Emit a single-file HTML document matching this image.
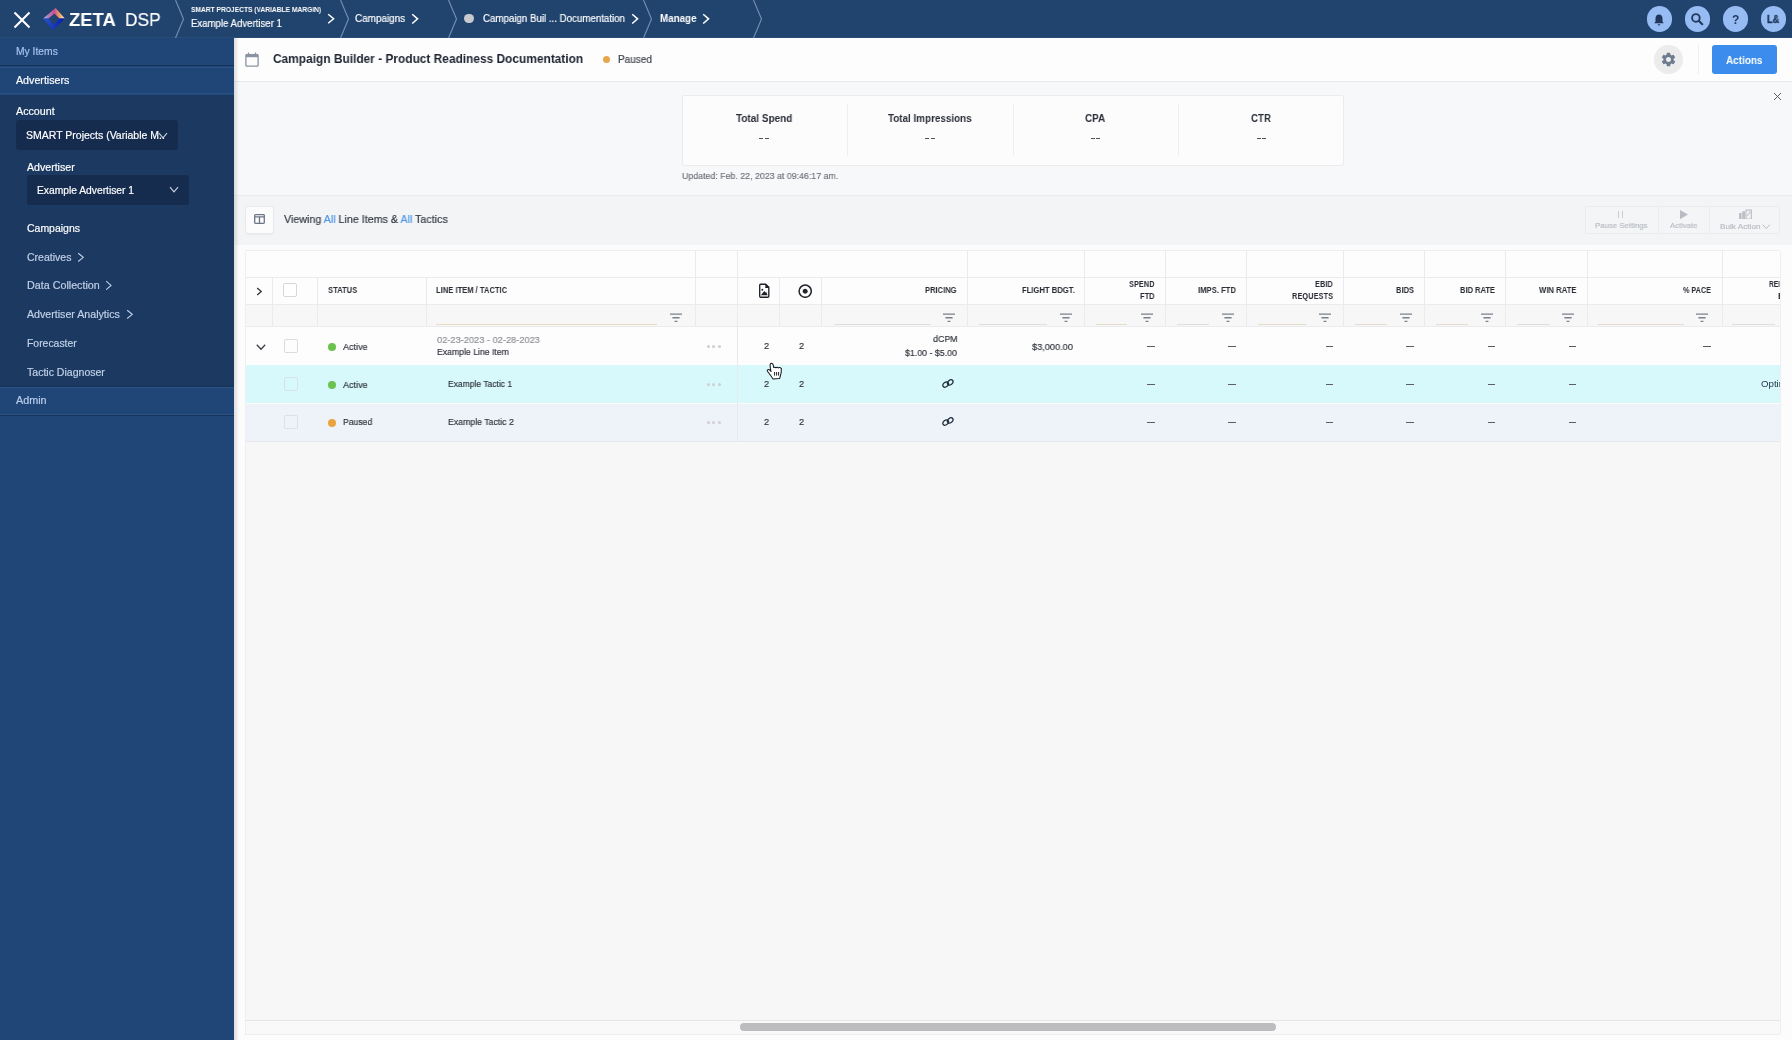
<!DOCTYPE html>
<html><head><meta charset="utf-8"><style>
html,body{margin:0;padding:0;width:1792px;height:1040px;overflow:hidden;background:#f6f6f8;}
.a{position:absolute;}
.t{will-change:transform;font-family:"Liberation Sans",sans-serif;line-height:1;white-space:nowrap;transform-origin:0 0;}
</style></head><body>
<div class="a" style="left:0px;top:0px;width:1792px;height:37px;background:#21446f;"></div>
<div class="a" style="left:0px;top:37px;width:1792px;height:1px;background:#2a4c78;"></div>
<svg class="a" style="left:13px;top:11px" width="18" height="18" viewBox="0 0 18 18"><path d="M1.5 1.5L16.5 16.5M16.5 1.5L1.5 16.5" stroke="#fff" stroke-width="2.1"/></svg>
<svg class="a" style="left:36px;top:4px" width="40" height="30" viewBox="36 4 40 30">
<defs><linearGradient id="lg1" gradientUnits="userSpaceOnUse" x1="43" y1="0" x2="65" y2="0"><stop offset="0" stop-color="#a6d0f5"/><stop offset="0.25" stop-color="#b27cb8"/><stop offset="0.52" stop-color="#cc4f94"/><stop offset="0.75" stop-color="#f0a060"/><stop offset="1" stop-color="#fff3d0"/></linearGradient>
<linearGradient id="lg2" gradientUnits="userSpaceOnUse" x1="43" y1="0" x2="65" y2="0"><stop offset="0" stop-color="#2a56cf"/><stop offset="1" stop-color="#0716ad"/></linearGradient></defs>
<path d="M43.2 18.6L55.6 8L64.8 18.6L59.6 18.6L54.4 13.4L48.4 18.6Z" fill="url(#lg1)"/>
<path d="M43.2 18.6L53 29.9L64.8 18.6L59.8 18.6L53.3 24.9L48.4 18.6Z" fill="url(#lg2)"/>
</svg>
<div class="a t" style="left:69.00px;top:10.30px;font-size:19px;color:#fff;font-weight:700;transform:scaleX(0.9696);">ZETA</div>
<div class="a t" style="left:125.09px;top:10.30px;font-size:19px;color:#fff;font-weight:400;-webkit-text-stroke:0.18px currentColor;transform:scaleX(0.9092);">DSP</div>
<svg class="a" style="left:339.5px;top:0" width="10" height="38" viewBox="0 0 10 38"><path d="M0.5 0 L8.5 19 L0.5 38" fill="none" stroke="#7890b4" stroke-width="1.1"/></svg>
<svg class="a" style="left:448.0px;top:0" width="10" height="38" viewBox="0 0 10 38"><path d="M0.5 0 L8.5 19 L0.5 38" fill="none" stroke="#7890b4" stroke-width="1.1"/></svg>
<svg class="a" style="left:642.5px;top:0" width="10" height="38" viewBox="0 0 10 38"><path d="M0.5 0 L8.5 19 L0.5 38" fill="none" stroke="#7890b4" stroke-width="1.1"/></svg>
<svg class="a" style="left:175px;top:0" width="10" height="38" viewBox="0 0 10 38"><path d="M0.5 0 L8.5 19 L0.5 38" fill="none" stroke="#7890b4" stroke-width="1.1"/></svg>
<svg class="a" style="left:753px;top:0" width="10" height="38" viewBox="0 0 10 38"><path d="M0.5 0 L8.5 19 L0.5 38" fill="none" stroke="#7890b4" stroke-width="1.1"/></svg>
<div class="a t" style="left:191.00px;top:5.85px;font-size:7.9px;color:#fff;font-weight:700;transform:scaleX(0.8445);">SMART PROJECTS (VARIABLE MARGIN)</div>
<div class="a t" style="left:191.00px;top:18.00px;font-size:10.6px;color:#fff;font-weight:400;-webkit-text-stroke:0.18px currentColor;transform:scaleX(0.9078);">Example Advertiser 1</div>
<svg class="a" style="left:327px;top:13px" width="8" height="11.5" viewBox="0 0 8 11.5"><path d="M1.2 1.2 L6.6 5.75 L1.2 10.3" fill="none" stroke="#fff" stroke-width="1.5"/></svg>
<div class="a t" style="left:355.00px;top:13.60px;font-size:10.4px;color:#fff;font-weight:400;-webkit-text-stroke:0.18px currentColor;transform:scaleX(0.9549);">Campaigns</div>
<svg class="a" style="left:410.5px;top:12.5px" width="8.0" height="11.7" viewBox="0 0 8.0 11.7"><path d="M1.2 1.2 L6.6 5.85 L1.2 10.5" fill="none" stroke="#fff" stroke-width="1.5"/></svg>
<div class="a" style="left:464.3px;top:13.8px;width:9.5px;height:9.5px;border-radius:50%;background:#c8cacf"></div>
<div class="a t" style="left:483.00px;top:13.60px;font-size:10.4px;color:#fff;font-weight:400;-webkit-text-stroke:0.18px currentColor;transform:scaleX(0.9348);">Campaign Buil ... Documentation</div>
<svg class="a" style="left:631px;top:12.5px" width="8" height="11.7" viewBox="0 0 8 11.7"><path d="M1.2 1.2 L6.6 5.85 L1.2 10.5" fill="none" stroke="#fff" stroke-width="1.5"/></svg>
<div class="a t" style="left:659.60px;top:13.60px;font-size:10.4px;color:#fff;font-weight:700;transform:scaleX(0.9433);">Manage</div>
<svg class="a" style="left:702px;top:12.5px" width="8" height="11.7" viewBox="0 0 8 11.7"><path d="M1.2 1.2 L6.6 5.85 L1.2 10.5" fill="none" stroke="#fff" stroke-width="1.5"/></svg>
<div class="a" style="left:1646.5px;top:6.2px;width:25.6px;height:25.6px;border-radius:50%;background:#97bcf3"></div>
<div class="a" style="left:1684.5px;top:6.2px;width:25.6px;height:25.6px;border-radius:50%;background:#97bcf3"></div>
<div class="a" style="left:1722.5px;top:6.2px;width:25.6px;height:25.6px;border-radius:50%;background:#97bcf3"></div>
<div class="a" style="left:1760.5px;top:6.2px;width:25.6px;height:25.6px;border-radius:50%;background:#97bcf3"></div>
<svg class="a" style="left:1652.3px;top:12.5px" width="14" height="14" viewBox="0 0 14 14"><path d="M7 1.6c-2.1 0-3.5 1.6-3.5 3.8v3.1L2.2 10.3h9.6L10.5 8.5V5.4C10.5 3.2 9.1 1.6 7 1.6z" fill="#1f355a"/><path d="M5.6 11.2h2.8L7 12.9z" fill="#1f355a"/></svg>
<svg class="a" style="left:1690.3px;top:12px" width="14" height="14" viewBox="0 0 14 14"><circle cx="5.9" cy="5.9" r="3.8" fill="none" stroke="#233a5e" stroke-width="1.9"/><path d="M8.8 8.8L12.2 12.2" stroke="#233a5e" stroke-width="2.2" stroke-linecap="round"/></svg>
<div class="a t" style="left:1731.80px;top:14.30px;font-size:12px;color:#233a5e;font-weight:700;">?</div>
<div class="a t" style="left:1767.00px;top:14.00px;font-size:10.6px;color:#1f355a;font-weight:700;transform:scaleX(0.8707);-webkit-text-stroke:0.35px currentColor;">L&amp;</div>
<div class="a" style="left:0px;top:38px;width:234px;height:1002px;background:#1f4677;"></div>
<div class="a" style="left:0px;top:65px;width:234px;height:1.2px;background:#183559;"></div>
<div class="a" style="left:0px;top:67px;width:234px;height:1px;background:#2a5284;"></div>
<div class="a" style="left:0px;top:93.3px;width:234px;height:1px;background:#2a5284;"></div>
<div class="a" style="left:0px;top:95px;width:234px;height:291px;background:#1b3961;"></div>
<div class="a" style="left:0px;top:386px;width:234px;height:1px;background:#172f52;"></div>
<div class="a" style="left:0px;top:387.2px;width:234px;height:1px;background:#2b5487;"></div>
<div class="a" style="left:0px;top:414.3px;width:234px;height:1px;background:#2a5284;"></div>
<div class="a" style="left:0px;top:415.3px;width:234px;height:1.2px;background:#183559;"></div>
<div class="a t" style="left:16.40px;top:46.70px;font-size:10.2px;color:#a6c3ef;font-weight:400;-webkit-text-stroke:0.18px currentColor;transform:scaleX(1.0116);">My Items</div>
<div class="a t" style="left:16.20px;top:75.70px;font-size:10.2px;color:#ffffff;font-weight:400;-webkit-text-stroke:0.18px currentColor;transform:scaleX(1.0480);">Advertisers</div>
<div class="a t" style="left:16.20px;top:106.70px;font-size:10.2px;color:#ffffff;font-weight:400;-webkit-text-stroke:0.18px currentColor;transform:scaleX(1.0492);">Account</div>
<div class="a" style="left:16.2px;top:120.3px;width:161.8px;height:30.1px;background:#152c4f;border-radius:3px;"></div>
<div class="a t" style="left:25.70px;top:130.05px;font-size:10.5px;color:#ffffff;font-weight:400;-webkit-text-stroke:0.18px currentColor;">SMART Projects (Variable M..</div>
<svg class="a" style="left:157.5px;top:132px" width="10" height="8" viewBox="0 0 10 8"><path d="M1 1.2L5 5.8L9 1.2" fill="none" stroke="#c8d2e2" stroke-width="1.1"/></svg>
<div class="a t" style="left:27.00px;top:162.70px;font-size:10.2px;color:#ffffff;font-weight:400;-webkit-text-stroke:0.18px currentColor;transform:scaleX(1.0395);">Advertiser</div>
<div class="a" style="left:27.3px;top:175.3px;width:161.5px;height:30.1px;background:#152c4f;border-radius:3px;"></div>
<div class="a t" style="left:36.80px;top:185.70px;font-size:10.2px;color:#ffffff;font-weight:400;-webkit-text-stroke:0.18px currentColor;transform:scaleX(1.0077);">Example Advertiser 1</div>
<svg class="a" style="left:168.5px;top:186px" width="10" height="8" viewBox="0 0 10 8"><path d="M1 1.2L5 5.8L9 1.2" fill="none" stroke="#c8d2e2" stroke-width="1.1"/></svg>
<div class="a t" style="left:26.90px;top:223.70px;font-size:10.2px;color:#ffffff;font-weight:400;-webkit-text-stroke:0.18px currentColor;transform:scaleX(1.0285);">Campaigns</div>
<div class="a t" style="left:26.90px;top:252.70px;font-size:10.2px;color:#c2d1e8;font-weight:400;-webkit-text-stroke:0.18px currentColor;transform:scaleX(1.0318);">Creatives</div>
<svg class="a" style="left:77px;top:251.5px" width="7.700000000000003" height="10.699999999999989" viewBox="0 0 7.700000000000003 10.699999999999989"><path d="M1.2 1.2 L6.3000000000000025 5.349999999999994 L1.2 9.49999999999999" fill="none" stroke="#c2d1e8" stroke-width="1.1"/></svg>
<div class="a t" style="left:26.90px;top:280.70px;font-size:10.2px;color:#c2d1e8;font-weight:400;-webkit-text-stroke:0.18px currentColor;transform:scaleX(1.0538);">Data Collection</div>
<svg class="a" style="left:104.8px;top:280px" width="7.400000000000006" height="10.800000000000011" viewBox="0 0 7.400000000000006 10.800000000000011"><path d="M1.2 1.2 L6.000000000000005 5.400000000000006 L1.2 9.600000000000012" fill="none" stroke="#c2d1e8" stroke-width="1.1"/></svg>
<div class="a t" style="left:26.90px;top:309.70px;font-size:10.2px;color:#c2d1e8;font-weight:400;-webkit-text-stroke:0.18px currentColor;transform:scaleX(1.0441);">Advertiser Analytics</div>
<svg class="a" style="left:126px;top:308.5px" width="7.699999999999989" height="10.699999999999989" viewBox="0 0 7.699999999999989 10.699999999999989"><path d="M1.2 1.2 L6.299999999999988 5.349999999999994 L1.2 9.49999999999999" fill="none" stroke="#c2d1e8" stroke-width="1.1"/></svg>
<div class="a t" style="left:26.90px;top:338.70px;font-size:10.2px;color:#c2d1e8;font-weight:400;-webkit-text-stroke:0.18px currentColor;transform:scaleX(1.0224);">Forecaster</div>
<div class="a t" style="left:26.90px;top:367.70px;font-size:10.2px;color:#c2d1e8;font-weight:400;-webkit-text-stroke:0.18px currentColor;transform:scaleX(1.0341);">Tactic Diagnoser</div>
<div class="a t" style="left:16.30px;top:395.70px;font-size:10.2px;color:#bccdeb;font-weight:400;-webkit-text-stroke:0.18px currentColor;transform:scaleX(1.0599);">Admin</div>
<div class="a" style="left:234px;top:38px;width:1558px;height:1002px;background:#fcfcfc;"></div>
<div class="a" style="left:245px;top:441px;width:1535px;height:578.5px;background:#f7f7f8;"></div>
<div class="a" style="left:234px;top:38px;width:1558px;height:43px;background:#fdfdfd;"></div>
<div class="a" style="left:234px;top:81px;width:1558px;height:1px;background:#e8e8eb;"></div>
<svg class="a" style="left:245px;top:51.5px" width="14" height="15" viewBox="0 0 14 15"><rect x="0.9" y="2.6" width="12.2" height="11.6" rx="0.8" fill="none" stroke="#8a93a3" stroke-width="1.3"/><rect x="0.9" y="2.6" width="12.2" height="2.6" fill="#8a93a3"/><path d="M3.5 0.5v3M10.5 0.5v3" stroke="#8a93a3" stroke-width="1.3"/></svg>
<div class="a t" style="left:273.00px;top:53.00px;font-size:12.6px;color:#1d2330;font-weight:700;transform:scaleX(0.9451);">Campaign Builder - Product Readiness Documentation</div>
<div class="a" style="left:603px;top:55.9px;width:7.3px;height:7.3px;border-radius:50%;background:#e6a64a"></div>
<div class="a t" style="left:617.70px;top:54.65px;font-size:10.3px;color:#3a3f4a;font-weight:400;-webkit-text-stroke:0.18px currentColor;transform:scaleX(0.9717);">Paused</div>
<div class="a" style="left:1654px;top:45px;width:28.6px;height:28.6px;border-radius:50%;background:#ececed"></div>
<svg class="a" style="left:1659.8px;top:50.8px" width="17" height="17" viewBox="0 0 24 24"><path fill="#6d7b91" d="M19.14 12.94c.04-.3.06-.61.06-.94 0-.32-.02-.64-.07-.94l2.03-1.58a.49.49 0 00.12-.61l-1.92-3.32a.488.488 0 00-.59-.22l-2.39.96c-.5-.38-1.03-.7-1.62-.94l-.36-2.54a.484.484 0 00-.48-.41h-3.84c-.24 0-.43.17-.47.41l-.36 2.54c-.59.24-1.130.57-1.620.94l-2.39-.96c-.22-.08-.47 0-.59.22L2.74 8.87c-.12.21-.08.47.12.61l2.030 1.58c-.05.3-.09.63-.09.94s.02.64.07.94l-2.03 1.58a.49.49 0 00-.12.61l1.92 3.32c.12.22.37.29.59.22l2.39-.96c.5.38 1.03.7 1.62.94l.36 2.54c.05.24.24.41.48.41h3.84c.24 0 .44-.17.47-.41l.36-2.54c.59-.24 1.13-.56 1.62-.94l2.39.96c.22.08.47 0 .59-.22l1.92-3.32c.12-.22.07-.47-.12-.61l-2.01-1.58zM12 15.6c-1.98 0-3.6-1.62-3.6-3.6s1.62-3.6 3.6-3.6 3.6 1.62 3.6 3.6-1.62 3.6-3.6 3.6z"/></svg>
<div class="a" style="left:1697.5px;top:45px;width:1px;height:29px;background:#efeff1;"></div>
<div class="a" style="left:1712px;top:45px;width:65.3px;height:29px;border-radius:3px;background:#3b8cec"></div>
<div class="a t" style="left:1726.35px;top:54.90px;font-size:10.8px;color:#fff;font-weight:700;transform:scaleX(0.9220);">Actions</div>
<div class="a" style="left:234px;top:82px;width:1558px;height:113px;background:#f7f8fa;"></div>
<div class="a" style="left:234px;top:195px;width:1558px;height:1px;background:#ebecef;"></div>
<svg class="a" style="left:1772.5px;top:91.5px" width="9" height="9" viewBox="0 0 9 9"><path d="M1 1L8 8M8 1L1 8" stroke="#50555e" stroke-width="0.95"/></svg>
<div class="a" style="left:681.5px;top:94.5px;width:662.6px;height:71.5px;background:#fcfcfd;border:1px solid #ececee;box-sizing:border-box;border-radius:2px;"></div>
<div class="a" style="left:847.4px;top:104.2px;width:1px;height:52.2px;background:#eeeeef;"></div>
<div class="a" style="left:1012.7px;top:104.2px;width:1px;height:52.2px;background:#eeeeef;"></div>
<div class="a" style="left:1178.3px;top:104.2px;width:1px;height:52.2px;background:#eeeeef;"></div>
<div class="a t" style="left:735.95px;top:112.70px;font-size:11.2px;color:#2a2e38;font-weight:700;transform:scaleX(0.8918);">Total Spend</div>
<div class="a" style="left:759.45px;top:137.5px;width:4.0px;height:1.5px;background:#4e535b;"></div>
<div class="a" style="left:764.95px;top:137.5px;width:4.0px;height:1.5px;background:#4e535b;"></div>
<div class="a t" style="left:888.20px;top:112.70px;font-size:11.2px;color:#2a2e38;font-weight:700;transform:scaleX(0.8808);">Total Impressions</div>
<div class="a" style="left:925.15px;top:137.5px;width:4.0px;height:1.5px;background:#4e535b;"></div>
<div class="a" style="left:930.65px;top:137.5px;width:4.0px;height:1.5px;background:#4e535b;"></div>
<div class="a t" style="left:1085.45px;top:112.70px;font-size:11.2px;color:#2a2e38;font-weight:700;transform:scaleX(0.8851);">CPA</div>
<div class="a" style="left:1090.75px;top:137.5px;width:4.0px;height:1.5px;background:#4e535b;"></div>
<div class="a" style="left:1096.25px;top:137.5px;width:4.0px;height:1.5px;background:#4e535b;"></div>
<div class="a t" style="left:1251.35px;top:112.70px;font-size:11.2px;color:#2a2e38;font-weight:700;transform:scaleX(0.8685);">CTR</div>
<div class="a" style="left:1256.55px;top:137.5px;width:4.0px;height:1.5px;background:#4e535b;"></div>
<div class="a" style="left:1262.05px;top:137.5px;width:4.0px;height:1.5px;background:#4e535b;"></div>
<div class="a t" style="left:681.50px;top:171.00px;font-size:9.6px;color:#6e7279;font-weight:400;-webkit-text-stroke:0.18px currentColor;transform:scaleX(0.9181);">Updated: Feb. 22, 2023 at 09:46:17 am.</div>
<div class="a" style="left:234px;top:196px;width:1558px;height:49px;background:#f3f4f6;"></div>
<div class="a" style="left:244.9px;top:206.1px;width:28.9px;height:28.3px;background:#fcfcfd;border:1px solid #e8e9ec;box-shadow:0 1px 1px rgba(0,0,0,0.04);border-radius:3px;box-sizing:border-box;"></div>
<svg class="a" style="left:253.6px;top:214px" width="11" height="10" viewBox="0 0 11 10"><rect x="0.7" y="0.7" width="9.6" height="8.6" rx="0.8" fill="none" stroke="#6d7686" stroke-width="1.3"/><path d="M0.7 2.9H10.3M5.5 2.9V9.3" stroke="#6d7686" stroke-width="1.3"/></svg>
<div class="a t" style="left:284.40px;top:213.70px;font-size:11.2px;color:#333842;font-weight:400;-webkit-text-stroke:0.18px currentColor;transform:scaleX(0.9564);">Viewing <span style="color:#4a94e6">All</span> Line Items &amp; <span style="color:#4a94e6">All</span> Tactics</div>
<div class="a" style="left:1584.5px;top:206.3px;width:195.7px;height:27.7px;background:#f4f5f7;border:1px solid #ebecef;border-radius:3px;box-sizing:border-box;"></div>
<div class="a" style="left:1658.3px;top:207px;width:1px;height:26px;background:#ebecef;"></div>
<div class="a" style="left:1709.3px;top:207px;width:1px;height:26px;background:#ebecef;"></div>
<div class="a" style="left:1618.3px;top:211px;width:1.1px;height:6.6px;background:#c9ccd1;"></div>
<div class="a" style="left:1622.3px;top:211px;width:1.1px;height:6.6px;background:#c9ccd1;"></div>
<div class="a t" style="left:1595.00px;top:221.80px;font-size:8px;color:#b7bbc2;font-weight:400;-webkit-text-stroke:0.18px currentColor;transform:scaleX(0.9756);">Pause Settings</div>
<svg class="a" style="left:1680px;top:209.7px" width="8" height="9.2" viewBox="0 0 8 9.2"><path d="M0 0L8 4.6L0 9.2Z" fill="#b9bdc3"/></svg>
<div class="a t" style="left:1670.00px;top:221.80px;font-size:8px;color:#b7bbc2;font-weight:400;-webkit-text-stroke:0.18px currentColor;transform:scaleX(0.9653);">Activate</div>
<svg class="a" style="left:1739px;top:208.5px" width="13" height="10" viewBox="0 0 13 10"><rect x="0" y="4" width="2.6" height="6" fill="#bcc0c6"/><rect x="3.2" y="2.2" width="2.8" height="7.8" fill="#bcc0c6"/><path d="M7 10V1.2H12.3V10Z" fill="none" stroke="#bcc0c6" stroke-width="1.2"/><path d="M8 7L11.5 2.5" stroke="#bcc0c6" stroke-width="1.1"/></svg>
<div class="a t" style="left:1720.00px;top:222.80px;font-size:8px;color:#b7bbc2;font-weight:400;-webkit-text-stroke:0.18px currentColor;transform:scaleX(1.0235);">Bulk Action</div>
<svg class="a" style="left:1761.5px;top:223.5px" width="8.5" height="5.5" viewBox="0 0 8.5 5.5"><path d="M0.6 0.6L4.25 4.6L7.9 0.6" fill="none" stroke="#b7bbc2" stroke-width="1"/></svg>
<div class="a" style="left:245px;top:250px;width:1535px;height:27px;background:#fdfdfd;"></div>
<div class="a" style="left:245px;top:277px;width:1535px;height:27px;background:#fdfdfd;"></div>
<div class="a" style="left:245px;top:304px;width:1535px;height:22.5px;background:#f7f7f8;"></div>
<div class="a" style="left:245px;top:326.5px;width:1535px;height:38.7px;background:#fdfdfd;"></div>
<div class="a" style="left:245px;top:365.2px;width:1535px;height:38.3px;background:#d8f9fb;"></div>
<div class="a" style="left:245px;top:403.5px;width:1535px;height:37.5px;background:#eef3f9;"></div>
<div class="a" style="left:245px;top:250px;width:1535px;height:1px;background:#eeeef0;"></div>
<div class="a" style="left:245px;top:277px;width:1535px;height:1px;background:#ebebee;"></div>
<div class="a" style="left:245px;top:304px;width:1535px;height:1px;background:#ebebee;"></div>
<div class="a" style="left:245px;top:326px;width:1535px;height:1px;background:#ebebee;"></div>
<div class="a" style="left:245px;top:441px;width:1535px;height:1px;background:#e6e8ec;"></div>
<div class="a" style="left:272.3px;top:277px;width:1px;height:49px;background:#ebebee;"></div>
<div class="a" style="left:317.3px;top:277px;width:1px;height:49px;background:#ebebee;"></div>
<div class="a" style="left:425.5px;top:277px;width:1px;height:49px;background:#ebebee;"></div>
<div class="a" style="left:779.2px;top:277px;width:1px;height:49px;background:#ebebee;"></div>
<div class="a" style="left:821.3px;top:277px;width:1px;height:49px;background:#ebebee;"></div>
<div class="a" style="left:694.5px;top:250px;width:1px;height:76px;background:#ebebee;"></div>
<div class="a" style="left:737.4px;top:250px;width:1px;height:76px;background:#ebebee;"></div>
<div class="a" style="left:967.4px;top:250px;width:1px;height:76px;background:#ebebee;"></div>
<div class="a" style="left:1084.2px;top:250px;width:1px;height:76px;background:#ebebee;"></div>
<div class="a" style="left:1165.2px;top:250px;width:1px;height:76px;background:#ebebee;"></div>
<div class="a" style="left:1246.4px;top:250px;width:1px;height:76px;background:#ebebee;"></div>
<div class="a" style="left:1343.4px;top:250px;width:1px;height:76px;background:#ebebee;"></div>
<div class="a" style="left:1424.2px;top:250px;width:1px;height:76px;background:#ebebee;"></div>
<div class="a" style="left:1505.4px;top:250px;width:1px;height:76px;background:#ebebee;"></div>
<div class="a" style="left:1586.7px;top:250px;width:1px;height:76px;background:#ebebee;"></div>
<div class="a" style="left:1721.5px;top:250px;width:1px;height:76px;background:#ebebee;"></div>
<div class="a" style="left:737.4px;top:326px;width:1px;height:115px;background:#e9e9ec;"></div>
<svg class="a" style="left:256px;top:287px" width="7" height="9" viewBox="0 0 7 9"><path d="M1.2 1L5.2 4.5L1.2 8" fill="none" stroke="#333" stroke-width="1.3"/></svg>
<div class="a" style="left:283.2px;top:283px;width:14px;height:14px;background:#fff;border:1px solid #d5d7db;border-radius:2px;box-sizing:border-box;"></div>
<div class="a t" style="left:328.20px;top:285.85px;font-size:8.9px;color:#2a2d35;font-weight:700;transform:scaleX(0.8552);">STATUS</div>
<div class="a t" style="left:436.20px;top:285.85px;font-size:8.9px;color:#2a2d35;font-weight:700;transform:scaleX(0.8562);">LINE ITEM / TACTIC</div>
<svg class="a" style="left:758px;top:283px" width="12" height="15" viewBox="0 0 12 15"><path d="M1.7 2.2Q1.7 1.2 2.7 1.2H7.6L10.8 4.4V13.2Q10.8 14.2 9.8 14.2H2.7Q1.7 14.2 1.7 13.2Z" fill="none" stroke="#1e2128" stroke-width="1.35"/><path d="M7.3 1.2H8.2L10.8 3.8V4.9H7.3Z" fill="#1e2128"/><path d="M2.9 12.3L6.3 7.9L7.5 9.4L8.1 8.8L9.6 12.3Z" fill="#1e2128"/><circle cx="4.3" cy="6.8" r="0.95" fill="#1e2128"/></svg>
<svg class="a" style="left:797.6px;top:283.6px" width="14.4" height="14.4" viewBox="0 0 14.4 14.4"><circle cx="7.2" cy="7.2" r="6.1" fill="none" stroke="#22252b" stroke-width="1.5"/><circle cx="7.2" cy="7.2" r="2.5" fill="#22252b"/></svg>
<div class="a t" style="left:925.40px;top:285.85px;font-size:8.9px;color:#2a2d35;font-weight:700;transform:scaleX(0.8522);">PRICING</div>
<div class="a t" style="left:1021.50px;top:285.85px;font-size:8.9px;color:#2a2d35;font-weight:700;transform:scaleX(0.8621);">FLIGHT BDGT.</div>
<div class="a t" style="left:1128.90px;top:279.85px;font-size:8.9px;color:#2a2d35;font-weight:700;transform:scaleX(0.8342);">SPEND</div>
<div class="a t" style="left:1139.80px;top:291.85px;font-size:8.9px;color:#2a2d35;font-weight:700;transform:scaleX(0.8463);">FTD</div>
<div class="a t" style="left:1197.50px;top:285.85px;font-size:8.9px;color:#2a2d35;font-weight:700;transform:scaleX(0.8657);">IMPS. FTD</div>
<div class="a t" style="left:1315.20px;top:279.85px;font-size:8.9px;color:#2a2d35;font-weight:700;transform:scaleX(0.8351);">EBID</div>
<div class="a t" style="left:1292.30px;top:291.85px;font-size:8.9px;color:#2a2d35;font-weight:700;transform:scaleX(0.8405);">REQUESTS</div>
<div class="a t" style="left:1396.20px;top:285.85px;font-size:8.9px;color:#2a2d35;font-weight:700;transform:scaleX(0.8457);">BIDS</div>
<div class="a t" style="left:1460.30px;top:285.85px;font-size:8.9px;color:#2a2d35;font-weight:700;transform:scaleX(0.8468);">BID RATE</div>
<div class="a t" style="left:1538.80px;top:285.85px;font-size:8.9px;color:#2a2d35;font-weight:700;transform:scaleX(0.8661);">WIN RATE</div>
<div class="a t" style="left:1683.00px;top:285.85px;font-size:8.9px;color:#2a2d35;font-weight:700;transform:scaleX(0.8131);">% PACE</div>
<svg class="a" style="left:669.5px;top:312.5px" width="12" height="9.5" viewBox="0 0 12 9.5"><path d="M0 1.1H12M2.4 4.8H9.6M4.6 8.4H7.4" stroke="#7b8089" stroke-width="1.4"/></svg>
<div class="a" style="left:436px;top:323.6px;width:221.29999999999995px;height:1.2px;background:#e9dcc2;"></div>
<svg class="a" style="left:943px;top:312.5px" width="12" height="9.5" viewBox="0 0 12 9.5"><path d="M0 1.1H12M2.4 4.8H9.6M4.6 8.4H7.4" stroke="#7b8089" stroke-width="1.4"/></svg>
<div class="a" style="left:833.5px;top:323.6px;width:96.20000000000005px;height:1.2px;background:#dedede;"></div>
<svg class="a" style="left:1059.7px;top:312.5px" width="12" height="9.5" viewBox="0 0 12 9.5"><path d="M0 1.1H12M2.4 4.8H9.6M4.6 8.4H7.4" stroke="#7b8089" stroke-width="1.4"/></svg>
<div class="a" style="left:979px;top:323.6px;width:67.90000000000009px;height:1.2px;background:#dedede;"></div>
<svg class="a" style="left:1140.7px;top:312.5px" width="12" height="9.5" viewBox="0 0 12 9.5"><path d="M0 1.1H12M2.4 4.8H9.6M4.6 8.4H7.4" stroke="#7b8089" stroke-width="1.4"/></svg>
<div class="a" style="left:1095.9px;top:323.6px;width:31.59999999999991px;height:1.2px;background:#e3dccb;"></div>
<svg class="a" style="left:1221.7px;top:312.5px" width="12" height="9.5" viewBox="0 0 12 9.5"><path d="M0 1.1H12M2.4 4.8H9.6M4.6 8.4H7.4" stroke="#7b8089" stroke-width="1.4"/></svg>
<div class="a" style="left:1177px;top:323.6px;width:32px;height:1.2px;background:#dedede;"></div>
<svg class="a" style="left:1318.7px;top:312.5px" width="12" height="9.5" viewBox="0 0 12 9.5"><path d="M0 1.1H12M2.4 4.8H9.6M4.6 8.4H7.4" stroke="#7b8089" stroke-width="1.4"/></svg>
<div class="a" style="left:1258px;top:323.6px;width:48.40000000000009px;height:1.2px;background:#e3dccb;"></div>
<svg class="a" style="left:1399.8px;top:312.5px" width="12" height="9.5" viewBox="0 0 12 9.5"><path d="M0 1.1H12M2.4 4.8H9.6M4.6 8.4H7.4" stroke="#7b8089" stroke-width="1.4"/></svg>
<div class="a" style="left:1354.8px;top:323.6px;width:32.700000000000045px;height:1.2px;background:#e3dccb;"></div>
<svg class="a" style="left:1480.8px;top:312.5px" width="12" height="9.5" viewBox="0 0 12 9.5"><path d="M0 1.1H12M2.4 4.8H9.6M4.6 8.4H7.4" stroke="#7b8089" stroke-width="1.4"/></svg>
<div class="a" style="left:1435.9px;top:323.6px;width:32.59999999999991px;height:1.2px;background:#e3dccb;"></div>
<svg class="a" style="left:1561.8px;top:312.5px" width="12" height="9.5" viewBox="0 0 12 9.5"><path d="M0 1.1H12M2.4 4.8H9.6M4.6 8.4H7.4" stroke="#7b8089" stroke-width="1.4"/></svg>
<div class="a" style="left:1517px;top:323.6px;width:32.59999999999991px;height:1.2px;background:#dedede;"></div>
<svg class="a" style="left:1695.8px;top:312.5px" width="12" height="9.5" viewBox="0 0 12 9.5"><path d="M0 1.1H12M2.4 4.8H9.6M4.6 8.4H7.4" stroke="#7b8089" stroke-width="1.4"/></svg>
<div class="a" style="left:1598px;top:323.6px;width:86.29999999999995px;height:1.2px;background:#e3dccb;"></div>
<div class="a" style="left:1733px;top:323.6px;width:42px;height:1.2px;background:#dedede;"></div>
<div class="a" style="left:1721.5px;top:250px;width:58.5px;height:191px;overflow:hidden" ><div class="a t" style="left:47.4px;top:29.57px;font-size:8.9px;font-weight:700;color:#2a2d35;transform:scaleX(0.74)">REI</div><div class="a t" style="left:56.8px;top:41.87px;font-size:8.9px;font-weight:700;color:#2a2d35">B</div><div class="a" style="left:10px;top:73.60000000000002px;width:42px;height:1.2px;background:#dedede"></div><div class="a t" style="left:39px;top:129.19px;font-size:9.7px;color:#2a3548">Optimize</div></div>
<svg class="a" style="left:256px;top:344px" width="10" height="6.5" viewBox="0 0 10 6.5"><path d="M0.8 0.8L5 5.2L9.2 0.8" fill="none" stroke="#3a3d44" stroke-width="1.3"/></svg>
<div class="a" style="left:283.8px;top:339.2px;width:14.1px;height:14px;background:transparent;border:1px solid #d9dbdf;border-radius:2px;box-sizing:border-box;"></div>
<div class="a" style="left:283.8px;top:377.3px;width:14.1px;height:14px;background:transparent;border:1px solid #d6e3e6;border-radius:2px;box-sizing:border-box;"></div>
<div class="a" style="left:283.8px;top:415.4px;width:14.1px;height:14px;background:transparent;border:1px solid #dde0e4;border-radius:2px;box-sizing:border-box;"></div>
<div class="a" style="left:328.40000000000003px;top:342.8px;width:7.8px;height:7.8px;border-radius:50%;background:#6cc24f"></div>
<div class="a t" style="left:343.00px;top:341.95px;font-size:9.7px;color:#2f333b;font-weight:400;-webkit-text-stroke:0.18px currentColor;transform:scaleX(0.9310);">Active</div>
<div class="a" style="left:328.40000000000003px;top:380.90000000000003px;width:7.8px;height:7.8px;border-radius:50%;background:#6cc24f"></div>
<div class="a t" style="left:343.00px;top:379.95px;font-size:9.7px;color:#2f333b;font-weight:400;-webkit-text-stroke:0.18px currentColor;transform:scaleX(0.9310);">Active</div>
<div class="a" style="left:328.40000000000003px;top:418.8px;width:7.8px;height:7.8px;border-radius:50%;background:#eaa43f"></div>
<div class="a t" style="left:343.00px;top:416.95px;font-size:9.7px;color:#2f333b;font-weight:400;-webkit-text-stroke:0.18px currentColor;transform:scaleX(0.8901);">Paused</div>
<div class="a t" style="left:436.70px;top:334.95px;font-size:9.7px;color:#8d8f94;font-weight:400;-webkit-text-stroke:0.18px currentColor;transform:scaleX(0.9550);">02-23-2023 - 02-28-2023</div>
<div class="a t" style="left:436.70px;top:346.95px;font-size:9.7px;color:#2f333b;font-weight:400;-webkit-text-stroke:0.18px currentColor;transform:scaleX(0.8945);">Example Line Item</div>
<div class="a t" style="left:447.60px;top:378.95px;font-size:9.7px;color:#2f333b;font-weight:400;-webkit-text-stroke:0.18px currentColor;transform:scaleX(0.8773);">Example Tactic 1</div>
<div class="a t" style="left:447.60px;top:416.95px;font-size:9.7px;color:#2f333b;font-weight:400;-webkit-text-stroke:0.18px currentColor;transform:scaleX(0.9007);">Example Tactic 2</div>
<div class="a" style="left:706.5999999999999px;top:344.90000000000003px;width:3.4px;height:3.4px;border-radius:50%;background:#cfcfd3"></div>
<div class="a" style="left:712.05px;top:344.90000000000003px;width:3.4px;height:3.4px;border-radius:50%;background:#cfcfd3"></div>
<div class="a" style="left:717.4999999999999px;top:344.90000000000003px;width:3.4px;height:3.4px;border-radius:50%;background:#cfcfd3"></div>
<div class="a" style="left:706.5999999999999px;top:382.7px;width:3.4px;height:3.4px;border-radius:50%;background:#cfcfd3"></div>
<div class="a" style="left:712.05px;top:382.7px;width:3.4px;height:3.4px;border-radius:50%;background:#cfcfd3"></div>
<div class="a" style="left:717.4999999999999px;top:382.7px;width:3.4px;height:3.4px;border-radius:50%;background:#cfcfd3"></div>
<div class="a" style="left:706.5999999999999px;top:420.6px;width:3.4px;height:3.4px;border-radius:50%;background:#cfcfd3"></div>
<div class="a" style="left:712.05px;top:420.6px;width:3.4px;height:3.4px;border-radius:50%;background:#cfcfd3"></div>
<div class="a" style="left:717.4999999999999px;top:420.6px;width:3.4px;height:3.4px;border-radius:50%;background:#cfcfd3"></div>
<div class="a t" style="left:763.60px;top:340.95px;font-size:9.7px;color:#2f333b;font-weight:400;-webkit-text-stroke:0.18px currentColor;transform:scaleX(0.9400);">2</div>
<div class="a t" style="left:798.60px;top:340.95px;font-size:9.7px;color:#2f333b;font-weight:400;-webkit-text-stroke:0.18px currentColor;transform:scaleX(0.9400);">2</div>
<div class="a t" style="left:763.60px;top:378.95px;font-size:9.7px;color:#2f333b;font-weight:400;-webkit-text-stroke:0.18px currentColor;transform:scaleX(0.9400);">2</div>
<div class="a t" style="left:798.60px;top:378.95px;font-size:9.7px;color:#2f333b;font-weight:400;-webkit-text-stroke:0.18px currentColor;transform:scaleX(0.9400);">2</div>
<div class="a t" style="left:763.60px;top:416.95px;font-size:9.7px;color:#2f333b;font-weight:400;-webkit-text-stroke:0.18px currentColor;transform:scaleX(0.9400);">2</div>
<div class="a t" style="left:798.60px;top:416.95px;font-size:9.7px;color:#2f333b;font-weight:400;-webkit-text-stroke:0.18px currentColor;transform:scaleX(0.9400);">2</div>
<div class="a t" style="left:932.50px;top:333.95px;font-size:9.7px;color:#2f333b;font-weight:400;-webkit-text-stroke:0.18px currentColor;transform:scaleX(0.9126);">dCPM</div>
<div class="a t" style="left:904.50px;top:347.95px;font-size:9.7px;color:#2f333b;font-weight:400;-webkit-text-stroke:0.18px currentColor;transform:scaleX(0.9098);">$1.00 - $5.00</div>
<div class="a t" style="left:1032.30px;top:341.95px;font-size:9.7px;color:#2f333b;font-weight:400;-webkit-text-stroke:0.18px currentColor;transform:scaleX(0.9495);">$3,000.00</div>
<svg class="a" style="left:942.3px;top:378.9px" width="12" height="9" viewBox="0 0 12 9"><g fill="none" stroke="#1f2a3c" stroke-width="1.25"><ellipse cx="3.7" cy="5.6" rx="3.1" ry="2.2" transform="rotate(-38 3.7 5.6)"/><ellipse cx="8.2" cy="3.4" rx="3.1" ry="2.2" transform="rotate(-38 8.2 3.4)"/></g></svg>
<svg class="a" style="left:942.3px;top:416.8px" width="12" height="9" viewBox="0 0 12 9"><g fill="none" stroke="#1f2a3c" stroke-width="1.25"><ellipse cx="3.7" cy="5.6" rx="3.1" ry="2.2" transform="rotate(-38 3.7 5.6)"/><ellipse cx="8.2" cy="3.4" rx="3.1" ry="2.2" transform="rotate(-38 8.2 3.4)"/></g></svg>
<div class="a" style="left:1147.2px;top:345.90000000000003px;width:7.8px;height:1.4px;background:#5a5d63;"></div>
<div class="a" style="left:1228.2px;top:345.90000000000003px;width:7.8px;height:1.4px;background:#5a5d63;"></div>
<div class="a" style="left:1325.6000000000001px;top:345.90000000000003px;width:7.8px;height:1.4px;background:#5a5d63;"></div>
<div class="a" style="left:1406.4px;top:345.90000000000003px;width:7.8px;height:1.4px;background:#5a5d63;"></div>
<div class="a" style="left:1487.5px;top:345.90000000000003px;width:7.8px;height:1.4px;background:#5a5d63;"></div>
<div class="a" style="left:1568.5px;top:345.90000000000003px;width:7.8px;height:1.4px;background:#5a5d63;"></div>
<div class="a" style="left:1147.2px;top:383.7px;width:7.8px;height:1.4px;background:#5a5d63;"></div>
<div class="a" style="left:1228.2px;top:383.7px;width:7.8px;height:1.4px;background:#5a5d63;"></div>
<div class="a" style="left:1325.6000000000001px;top:383.7px;width:7.8px;height:1.4px;background:#5a5d63;"></div>
<div class="a" style="left:1406.4px;top:383.7px;width:7.8px;height:1.4px;background:#5a5d63;"></div>
<div class="a" style="left:1487.5px;top:383.7px;width:7.8px;height:1.4px;background:#5a5d63;"></div>
<div class="a" style="left:1568.5px;top:383.7px;width:7.8px;height:1.4px;background:#5a5d63;"></div>
<div class="a" style="left:1147.2px;top:421.6px;width:7.8px;height:1.4px;background:#5a5d63;"></div>
<div class="a" style="left:1228.2px;top:421.6px;width:7.8px;height:1.4px;background:#5a5d63;"></div>
<div class="a" style="left:1325.6000000000001px;top:421.6px;width:7.8px;height:1.4px;background:#5a5d63;"></div>
<div class="a" style="left:1406.4px;top:421.6px;width:7.8px;height:1.4px;background:#5a5d63;"></div>
<div class="a" style="left:1487.5px;top:421.6px;width:7.8px;height:1.4px;background:#5a5d63;"></div>
<div class="a" style="left:1568.5px;top:421.6px;width:7.8px;height:1.4px;background:#5a5d63;"></div>
<div class="a" style="left:1703.2px;top:345.90000000000003px;width:7.8px;height:1.4px;background:#5a5d63;"></div>
<svg class="a" style="left:760px;top:358px" width="30" height="26" viewBox="0 0 30 26"><path d="M11.5 5.2C12.6 5.2 13.3 6.5 13.6 8.8L13.8 9.6C14.5 9.2 15.5 9.3 16 9.8C16.6 9.3 17.7 9.3 18.3 9.9C19 9.5 20.5 9.7 21.4 10.6C21.6 13 21.2 16 19.6 20.6L13 21C11.2 18 9 15.5 7.4 13.2C7 12.2 7.6 11.5 8.6 11.6C9.6 11.7 10.3 12.5 11 13.5C10.3 10.5 10.1 8 10.1 6.8C10.1 5.8 10.7 5.2 11.5 5.2Z" fill="#fff" stroke="#15171b" stroke-width="1.05" stroke-linejoin="round"/><path d="M14.6 14v3.6M16.6 14v3.6M18.6 14v3.6" stroke="#15171b" stroke-width="0.95"/></svg>
<div class="a" style="left:245px;top:1019.5px;width:1535px;height:1px;background:#e5e5e7;"></div>
<div class="a" style="left:245px;top:1020.5px;width:1535px;height:13px;background:#f9f9fa;"></div>
<div class="a" style="left:245px;top:1033.5px;width:1535px;height:1.2px;background:#efeff1;"></div>
<div class="a" style="left:740px;top:1023px;width:535.5px;height:8.3px;background:#bdbdbf;border-radius:4.2px;"></div>
<div class="a" style="left:1780px;top:252px;width:1px;height:782px;background:#efeff1;"></div>
<div class="a" style="left:245px;top:252px;width:1px;height:782px;background:#efeff1;"></div>
<div class="a" style="left:234px;top:38px;width:5px;height:1002px;background:linear-gradient(90deg,rgba(0,0,0,0.13),rgba(0,0,0,0));"></div>
</body></html>
